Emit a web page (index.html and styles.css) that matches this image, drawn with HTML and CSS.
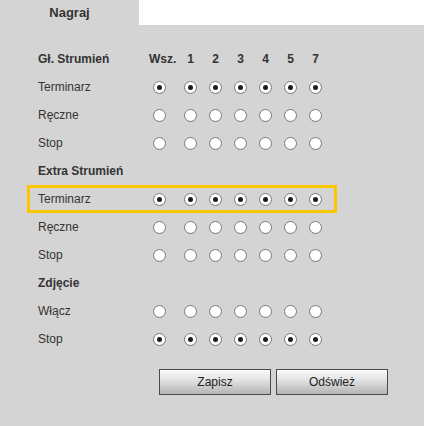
FILE: index.html
```html
<!DOCTYPE html>
<html lang="pl">
<head>
<meta charset="utf-8">
<title>Nagraj</title>
<link rel="stylesheet" href="styles.css">
</head>
<body>
<div class="tabs">
  <div class="tab">Nagraj</div>
  <div class="tab-rest"></div>
</div>
<div class="form">
  <div class="row head">
    <span class="label">Gł. Strumień</span>
    <span class="cell wsz">Wsz.</span>
    <span class="cell first">1</span>
    <span class="cell">2</span>
    <span class="cell">3</span>
    <span class="cell">4</span>
    <span class="cell">5</span>
    <span class="cell">7</span>
  </div>
  <div class="row">
    <span class="label">Terminarz</span>
    <span class="cell"><i class="radio on"></i></span>
    <span class="cell first"><i class="radio on"></i></span>
    <span class="cell"><i class="radio on"></i></span>
    <span class="cell"><i class="radio on"></i></span>
    <span class="cell"><i class="radio on"></i></span>
    <span class="cell"><i class="radio on"></i></span>
    <span class="cell"><i class="radio on"></i></span>
  </div>
  <div class="row">
    <span class="label">Ręczne</span>
    <span class="cell"><i class="radio"></i></span>
    <span class="cell first"><i class="radio"></i></span>
    <span class="cell"><i class="radio"></i></span>
    <span class="cell"><i class="radio"></i></span>
    <span class="cell"><i class="radio"></i></span>
    <span class="cell"><i class="radio"></i></span>
    <span class="cell"><i class="radio"></i></span>
  </div>
  <div class="row">
    <span class="label">Stop</span>
    <span class="cell"><i class="radio"></i></span>
    <span class="cell first"><i class="radio"></i></span>
    <span class="cell"><i class="radio"></i></span>
    <span class="cell"><i class="radio"></i></span>
    <span class="cell"><i class="radio"></i></span>
    <span class="cell"><i class="radio"></i></span>
    <span class="cell"><i class="radio"></i></span>
  </div>
  <div class="row head">
    <span class="label">Extra Strumień</span>
  </div>
  <div class="row highlight">
    <span class="label">Terminarz</span>
    <span class="cell"><i class="radio on"></i></span>
    <span class="cell first"><i class="radio on"></i></span>
    <span class="cell"><i class="radio on"></i></span>
    <span class="cell"><i class="radio on"></i></span>
    <span class="cell"><i class="radio on"></i></span>
    <span class="cell"><i class="radio on"></i></span>
    <span class="cell"><i class="radio on"></i></span>
  </div>
  <div class="row">
    <span class="label">Ręczne</span>
    <span class="cell"><i class="radio"></i></span>
    <span class="cell first"><i class="radio"></i></span>
    <span class="cell"><i class="radio"></i></span>
    <span class="cell"><i class="radio"></i></span>
    <span class="cell"><i class="radio"></i></span>
    <span class="cell"><i class="radio"></i></span>
    <span class="cell"><i class="radio"></i></span>
  </div>
  <div class="row">
    <span class="label">Stop</span>
    <span class="cell"><i class="radio"></i></span>
    <span class="cell first"><i class="radio"></i></span>
    <span class="cell"><i class="radio"></i></span>
    <span class="cell"><i class="radio"></i></span>
    <span class="cell"><i class="radio"></i></span>
    <span class="cell"><i class="radio"></i></span>
    <span class="cell"><i class="radio"></i></span>
  </div>
  <div class="row head">
    <span class="label">Zdjęcie</span>
  </div>
  <div class="row">
    <span class="label">Włącz</span>
    <span class="cell"><i class="radio"></i></span>
    <span class="cell first"><i class="radio"></i></span>
    <span class="cell"><i class="radio"></i></span>
    <span class="cell"><i class="radio"></i></span>
    <span class="cell"><i class="radio"></i></span>
    <span class="cell"><i class="radio"></i></span>
    <span class="cell"><i class="radio"></i></span>
  </div>
  <div class="row">
    <span class="label">Stop</span>
    <span class="cell"><i class="radio on"></i></span>
    <span class="cell first"><i class="radio on"></i></span>
    <span class="cell"><i class="radio on"></i></span>
    <span class="cell"><i class="radio on"></i></span>
    <span class="cell"><i class="radio on"></i></span>
    <span class="cell"><i class="radio on"></i></span>
    <span class="cell"><i class="radio on"></i></span>
  </div>
  <div class="buttons">
    <button class="btn">Zapisz</button>
    <button class="btn">Odśwież</button>
  </div>
</div>
</body>
</html>
```

FILE: styles.css
```css
html, body {
  margin: 0;
  padding: 0;
  background: #d4d4d4;
  font-family: "Liberation Sans", Arial, sans-serif;
  font-size: 12px;
  color: #333;
}
.tabs {
  display: flex;
  height: 25px;
}
.tab {
  width: 139px;
  text-align: center;
  font-weight: bold;
  font-size: 13px;
  line-height: 25px;
  color: #333;
  padding-top: 0;
}
.tab-rest {
  flex: 1;
  background: #fff;
}
.form {
  padding-top: 20px;
}
.row {
  display: flex;
  align-items: center;
  height: 28px;
  margin-left: 27px;
  width: 310px;
  padding-left: 11px;
  box-sizing: border-box;
}
.row.head {
  font-weight: bold;
}
.row.highlight {
  box-shadow: inset 0 0 0 3px #fcc700;
}
.label {
  width: 109px;
  flex: none;
  white-space: nowrap;
}
.cell {
  width: 25px;
  flex: none;
  display: flex;
  justify-content: center;
  align-items: center;
}
.cell.first {
  margin-left: 6px;
}
.cell.wsz {
  justify-content: flex-start;
  padding-left: 2px;
  box-sizing: border-box;
  white-space: nowrap;
}
.radio {
  display: block;
  width: 13px;
  height: 13px;
  box-sizing: border-box;
  border-radius: 50%;
  border: 1px solid #7d7d7d;
  background: radial-gradient(circle at 50% 40%, #ffffff 55%, #ececec 100%);
  position: relative;
}
.radio.on::after {
  content: "";
  position: absolute;
  left: 3px;
  top: 3px;
  width: 5px;
  height: 5px;
  border-radius: 50%;
  background: #1c1c1c;
}
.buttons {
  display: flex;
  gap: 5px;
  padding-left: 159px;
  margin-top: 16px;
}
.btn {
  width: 112px;
  height: 26px;
  box-sizing: border-box;
  border: 1px solid #4a4a4a;
  background: linear-gradient(to bottom, #fafafa 0%, #e4e4e4 40%, #b4b4b4 100%);
  font-family: "Liberation Sans", Arial, sans-serif;
  font-size: 12px;
  color: #222;
  padding: 0;
}
```
